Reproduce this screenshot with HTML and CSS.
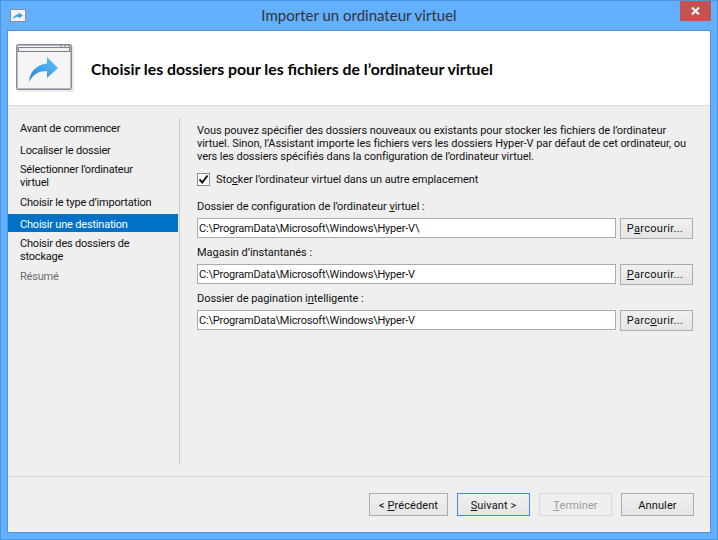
FILE: index.html
```html
<!DOCTYPE html>
<html lang="fr">
<head>
<meta charset="utf-8">
<title>Importer un ordinateur virtuel</title>
<link rel="stylesheet" href="styles.css">
</head>
<body>
<div class="window">
  <div class="titlebar">
    <svg class="app-icon" width="16" height="13" viewBox="0 0 16 13">
      <rect x="0.5" y="0.5" width="15" height="12" fill="#f4f4f4" stroke="#8a8f98"/>
      <path d="M3 10.500C3.500 7 6 5.500 8.500 5.500V3.500L13 6.500L8.500 9.500V7.500C6.500 7.500 4.500 8.500 3 10.500Z" fill="#2f9fe8"/>
    </svg>
    <div class="title">Importer un ordinateur virtuel</div>
    <div class="close">
      <svg width="9" height="8" viewBox="0 0 9 8"><path d="M1 0.500L8 7.500M8 0.500L1 7.500" stroke="#fff" stroke-width="2"/></svg>
    </div>
  </div>
  <div class="client">
    <header class="header">
      <svg class="hero" width="58" height="48" viewBox="0 0 58 48">
        <rect x="2" y="2" width="56" height="46" fill="#dfdfdf" opacity=".6"/>
        <rect x="0.5" y="0.5" width="55" height="45" rx="1" fill="#f5f5f5" stroke="#868c96"/>
        <rect x="1.500" y="1.500" width="53" height="43" fill="none" stroke="#b4b8be"/>
        <rect x="2.500" y="3.500" width="51" height="4" fill="#f0f1f3" stroke="#7d838d"/>
        <path d="M44 2h2M48 2h2M52 2h2" stroke="#6f747c"/>
        <defs><linearGradient id="arrow" x1="0" y1="1" x2="1" y2="0"><stop offset="0" stop-color="#1f86d8"/><stop offset="1" stop-color="#62c4fb"/></linearGradient></defs>
        <path d="M13 38C13.500 29 19 21 31 19.500V13L42 24L31 34V27C23 27 17 30 13 38Z" fill="url(#arrow)"/>
      </svg>
      <h1 class="heading">Choisir les dossiers pour les fichiers de l’ordinateur virtuel</h1>
    </header>
    <div class="body">
      <nav class="steps">
        <div class="step first">Avant de commencer</div>
        <div class="step s1">Localiser le dossier</div>
        <div class="step s2">Sélectionner l’ordinateur virtuel</div>
        <div class="step s3">Choisir le type d’importation</div>
        <div class="step active">Choisir une destination</div>
        <div class="step s4">Choisir des dossiers de stockage</div>
        <div class="step muted">Résumé</div>
      </nav>
      <main class="pane">
        <p class="intro">Vous pouvez spécifier des dossiers nouveaux ou existants pour stocker les fichiers de l’ordinateur virtuel. Sinon, l’Assistant importe les fichiers vers les dossiers Hyper-V par défaut de cet ordinateur, ou vers les dossiers spécifiés dans la configuration de l’ordinateur virtuel.</p>
        <div class="check-row">
          <span class="checkbox"><svg width="11" height="11" viewBox="0 0 11 11"><path d="M1.500 5.500L4.300 8.500L9.500 1.500" fill="none" stroke="#111" stroke-width="2"/></svg></span>
          <span>Sto<u>c</u>ker l’ordinateur virtuel dans un autre emplacement</span>
        </div>
        <div class="field first-field">
          <label class="label">Dossier de configuration de l’ordinateur <u>v</u>irtuel :</label>
          <div class="input-row">
            <div class="input">C:\ProgramData\Microsoft\Windows\Hyper-V\</div>
            <div class="btn browse">P<u>a</u>rcourir...</div>
          </div>
        </div>
        <div class="field">
          <label class="label">Ma<u>g</u>asin d’instantanés :</label>
          <div class="input-row">
            <div class="input">C:\ProgramData\Microsoft\Windows\Hyper-V</div>
            <div class="btn browse"><u>P</u>arcourir...</div>
          </div>
        </div>
        <div class="field">
          <label class="label">Dossier de pagination i<u>n</u>telligente :</label>
          <div class="input-row">
            <div class="input">C:\ProgramData\Microsoft\Windows\Hyper-V</div>
            <div class="btn browse">Parc<u>o</u>urir...</div>
          </div>
        </div>
      </main>
    </div>
    <footer class="footer">
      <div class="btn nav prev">&lt; <u>P</u>récédent</div>
      <div class="btn nav next"><u>S</u>uivant &gt;</div>
      <div class="btn nav disabled"><u>T</u>erminer</div>
      <div class="btn nav cancel">Annuler</div>
    </footer>
  </div>
</div>
</body>
</html>
```
FILE: styles.css
```css
* { box-sizing: border-box; }
html, body { margin: 0; padding: 0; }
body { width: 718px; height: 540px; overflow: hidden; font-family: Roboto, "Open Sans", sans-serif; font-size: 11px; letter-spacing: -.2px; color: #111; }
u { text-decoration: underline; text-underline-offset: 1px; text-decoration-thickness: 1px; }
.window { width: 718px; height: 540px; background: #62b0ff; border: 1px solid #4f94dc; display: flex; flex-direction: column; padding: 0 6px 6px; }
.titlebar { height: 29px; flex: none; display: flex; align-items: flex-start; position: relative; }
.app-icon { margin: 8px 0 0 3px; flex: none; }
.title { position: absolute; left: 0; right: 0; top: 4px; text-align: center; font-family: Lato, sans-serif; font-size: 15px; letter-spacing: 0; line-height: 20px; color: #333; }
.close { position: absolute; right: 0; top: 0; width: 31px; height: 20px; background: #c75050; display: flex; align-items: center; justify-content: center; }
.client { flex: 1; background: #efefef; border: 1px solid #4f94dc; display: flex; flex-direction: column; min-height: 0; }
.header { height: 75px; flex: none; background: #fff; border-bottom: 1px solid #dcdcdc; display: flex; align-items: center; padding-left: 8px; }
.hero { flex: none; }
.heading { margin: 2px 0 0 17px; font-family: Lato, sans-serif; font-size: 15.800px; letter-spacing: 0; font-weight: 700; line-height: 20px; color: #000; }
.body { flex: 1; display: flex; min-height: 0; border-bottom: 1px solid #dcdcdc; padding-top: 12px; }
.steps { width: 170px; flex: none; height: 346px; display: flex; flex-direction: column; }
.step { padding: 1px 10px 0 12px; line-height: 13px; }
.first { margin-top: 3px; }
.s1 { margin-top: 8px; }
.s2 { margin-top: 5px; padding-right: 30px; }
.s3 { margin-top: 6px; }
.active { margin-top: 5px; padding-top: 0; height: 18px; line-height: 21px; background: #0072c6; color: #fff; }
.s4 { margin-top: 4px; padding-right: 30px; }
.muted { margin-top: 6px; color: #6d6d6d; }
.pane { flex: 1; height: 346px; margin-left: 1px; border-left: 1px solid #c9c9c9; padding: 6px 17px 0 17px; letter-spacing: -.07px; }
.intro { margin: 0; line-height: 13px; }
.check-row { display: flex; align-items: center; margin: 9px 0 0; gap: 6px; height: 14px; }
.checkbox { width: 13px; height: 13px; background: #fff; border: 1px solid #8e8f8f; display: flex; align-items: center; justify-content: center; flex: none; }
.field { margin-top: 7px; }
.first-field { margin-top: 14px; }
.label { display: block; line-height: 13px; letter-spacing: -.04px; }
.input-row { display: flex; gap: 4px; margin-top: 5px; }
.input { width: 419px; height: 20px; background: #fff; border: 1px solid #ababab; line-height: 19px; padding-left: 1px; white-space: nowrap; letter-spacing: -.2px; }
.btn { background: linear-gradient(#f0f0f0, #e5e5e5); border: 1px solid #acacac; text-align: center; }
.browse { width: 73px; height: 21px; line-height: 20px; letter-spacing: .3px; padding-right: 3px; }
.footer { flex: none; display: flex; justify-content: flex-end; padding: 16px 16px 0 0; height: 55px; gap: 9px; }
.nav { width: 73px; height: 23px; line-height: 23px; letter-spacing: .1px; }
.prev { width: 79px; }
.next { border-color: #3c8ee6; }
.disabled { color: #9c9c9c; border-color: #d9d9d9; background: #efefef; }
```
